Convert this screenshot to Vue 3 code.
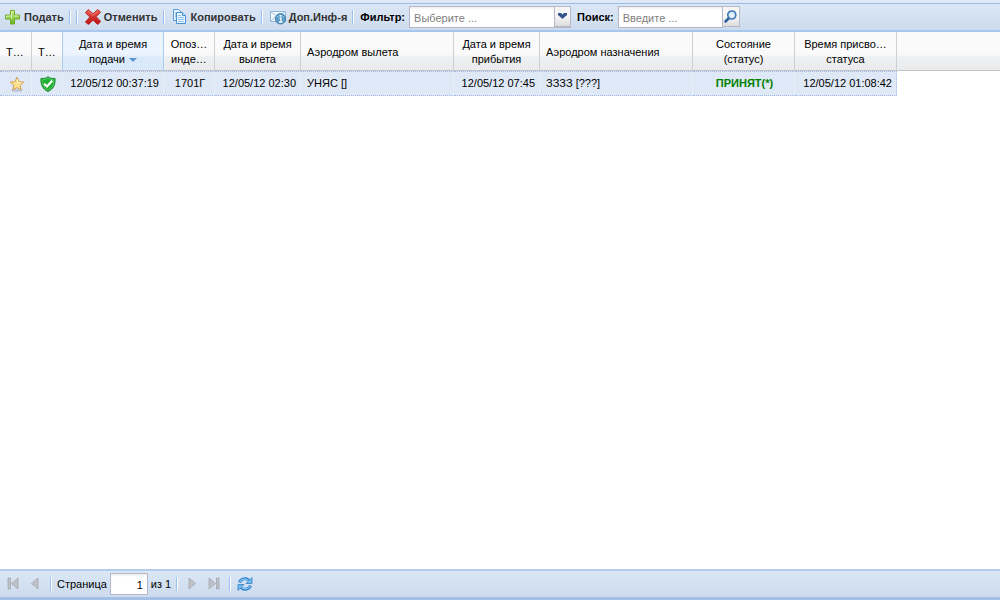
<script setup>
import { ref } from 'vue'

const filter = ref('')
const search = ref('')
const page = ref('1')

const columns = [
  { key: 'star', width: 32, lines: ['Т…'], left: true },
  { key: 'shield', width: 31, lines: ['Т…'], left: true },
  { key: 'filed', width: 101, lines: ['Дата и время', 'подачи'], sorted: true },
  { key: 'ident', width: 51, lines: ['Опоз…', 'инде…'] },
  { key: 'departure', width: 86, lines: ['Дата и время', 'вылета'] },
  { key: 'from', width: 153, lines: ['Аэродром вылета'], left: true },
  { key: 'arrival', width: 86, lines: ['Дата и время', 'прибытия'] },
  { key: 'to', width: 153, lines: ['Аэродром назначения'], left: true },
  { key: 'status', width: 102, lines: ['Состояние', '(статус)'] },
  { key: 'statusTime', width: 102, lines: ['Время присво…', 'статуса'] },
]

const rows = [
  {
    filed: '12/05/12 00:37:19',
    ident: '1701Г',
    departure: '12/05/12 02:30',
    from: 'УНЯС []',
    arrival: '12/05/12 07:45',
    to: 'ЗЗЗЗ [???]',
    status: 'ПРИНЯТ(*)',
    statusTime: '12/05/12 01:08:42',
  },
]
</script>

<template>
  <main class="panel">
    <div class="toolbar" role="toolbar">
      <button type="button" class="tool">
        <svg class="icon" viewBox="0 0 16 16" aria-hidden="true">
          <defs>
            <linearGradient id="plus" x2="0" y2="1"><stop stop-color="#c6ee86" /><stop offset="1" stop-color="#65b51d" /></linearGradient>
          </defs>
          <path d="M5.5 1.5h4v4.5h5v4h-5v5h-4v-5h-5v-4h5z" fill="url(#plus)" stroke="#6aa82c" />
          <path d="M6.5 10V2.500h2M1.500 9V7h5M9 7h4.500" fill="none" stroke="#e3f8bd" stroke-opacity=".8" />
        </svg>
        <span>Подать</span>
      </button>
      <i class="sep"></i>
      <i class="sep"></i>
      <button type="button" class="tool">
        <svg class="icon" viewBox="0 0 16 16" aria-hidden="true">
          <defs>
            <linearGradient id="cross" x2="0" y2="1"><stop stop-color="#ec5b54" /><stop offset="1" stop-color="#b80e0e" /></linearGradient>
          </defs>
          <path d="M3.300.500 8 4.800 12.700.500 15.700 3.200 11.200 7.700 15.800 12.500 12.700 15.600 8 11.200 3.500 15.600.300 13 4.800 8 .300 3.700z" fill="url(#cross)" stroke="#b51f1d" stroke-width=".8" />
          <path d="M3.500 2.200 8 6.500l4.500-4.300" fill="none" stroke="#f58b80" stroke-width=".8" />
        </svg>
        <span>Отменить</span>
      </button>
      <i class="sep"></i>
      <button type="button" class="tool">
        <svg class="icon" viewBox="0 0 16 16" aria-hidden="true">
          <path d="M1.500.500h5l3 3v8h-8z" fill="#e4f2ff" stroke="#5d9cd8" />
          <path d="M3 4h2M3 6h2M3 8h2" stroke="#7eb4e6" />
          <path d="M4.500 3.500h6l3 3v8h-9z" fill="#e9f5ff" stroke="#4b90d1" />
          <path d="M10.500 3.500v3h3" fill="#b9dbf8" stroke="#4b90d1" />
          <path d="M6 6.500h3M6 8.500h6M6 10.500h6M6 12.500h6" stroke="#8fc0ec" />
        </svg>
        <span>Копировать</span>
      </button>
      <i class="sep"></i>
      <button type="button" class="tool">
        <svg class="icon" viewBox="0 0 16 16" aria-hidden="true">
          <path d="M.5 2.500h15v10H.500z" fill="#f3f8fd" stroke="#8fb8de" />
          <path d="M1 3l7 5 7-5M1 12l4-4" fill="none" stroke="#a9c8e5" />
          <circle cx="10.500" cy="9.800" r="5.200" fill="#5a9bc8" stroke="#457fa9" />
          <path d="M7 8.500a4 4 0 0 1 7 0" fill="none" stroke="#a7d0ea" />
          <path d="M10.500 6.300v1.500M9.500 9.200h1.500v4M9 13h3.500" fill="none" stroke="#fff" stroke-width="1.300" />
        </svg>
        <span>Доп.Инф-я</span>
      </button>
      <i class="sep"></i>
      <label for="filter" class="caption">Фильтр:</label>
      <span class="combo">
        <select id="filter" v-model="filter" class="field select">
          <option value="">Выберите ...</option>
        </select>
        <span class="trigger arrow">
          <svg viewBox="0 0 15 18" aria-hidden="true"><path d="M3 6h3l1.500 1.500L9 6h3v2l-4.500 4L3 8z" fill="#33558a" /></svg>
        </span>
      </span>
      <label for="search" class="caption">Поиск:</label>
      <span class="combo">
        <input id="search" v-model="search" class="field search" type="text" placeholder="Введите ..." />
        <button type="button" class="trigger find" aria-label="Найти">
          <svg viewBox="0 0 15 18" aria-hidden="true">
            <path d="M5.500 10.500 2.500 13.500" stroke="#2d5f9e" stroke-width="2.500" stroke-linecap="round" />
            <circle cx="8.800" cy="7" r="4" fill="#e3eefb" stroke="#3f78b8" stroke-width="1.700" />
          </svg>
        </button>
      </span>
    </div>

    <div class="grid">
      <table>
        <colgroup>
          <col v-for="c in columns" :key="c.key" :style="{ width: c.width + 'px' }" />
          <col />
        </colgroup>
        <thead>
          <tr>
            <th v-for="c in columns" :key="c.key" scope="col" :class="{ left: c.left, sorted: c.sorted }">
              <div v-for="(line, i) in c.lines" :key="i" class="line">
                {{ line }}<svg v-if="c.sorted && i === 1" class="sort" viewBox="0 0 8 4" aria-hidden="true"><path d="M0 0h8L4 4z" fill="#5b93d2" /></svg>
              </div>
            </th>
            <td class="filler"></td>
          </tr>
        </thead>
        <tbody>
          <tr v-for="(r, n) in rows" :key="n" class="selected">
            <td class="mark">
              <svg class="icon" viewBox="0 0 16 16" aria-label="Избранное">
                <ellipse cx="8" cy="14.500" rx="5.500" ry="1.200" fill="#b9c3d4" />
                <path d="M8 1.200 10 5.600l4.700.500-3.500 3.200 1 4.700L8 11.600 3.800 14l1-4.700L1.300 6.100 6 5.600z" fill="#ffe08d" stroke="#cf9f58" stroke-linejoin="round" />
                <path d="M8 3.500 9.300 6.500l3 .300" fill="none" stroke="#fff3c4" />
              </svg>
            </td>
            <td class="mark shield">
              <svg class="icon" viewBox="0 0 16 16" aria-label="Проверено">
                <path d="M8 .700C10 2.500 12.500 2.800 15 2.300 15.500 8.500 13.500 13 8 15.500 2.500 13 .500 8.500 1 2.300 3.500 2.800 6 2.500 8 .700z" fill="#22ae35" stroke="#168b29" />
                <path d="M8 2.200c2 1.400 3.800 1.700 5.800 1.500C14 8 12.500 12 8 14.200 3.500 12 2 8 2.200 3.700 4.200 3.900 6 3.600 8 2.200z" fill="none" stroke="#69d374" stroke-width=".7" />
                <path d="M4.200 7.800 7 10.500l5.200-5.700" fill="none" stroke="#fff" stroke-width="2.200" />
              </svg>
            </td>
            <td class="end">{{ r.filed }}</td>
            <td class="center">{{ r.ident }}</td>
            <td class="end">{{ r.departure }}</td>
            <td>{{ r.from }}</td>
            <td class="end">{{ r.arrival }}</td>
            <td>{{ r.to }}</td>
            <td class="center status">{{ r.status }}</td>
            <td class="end last">{{ r.statusTime }}</td>
            <td class="blank"></td>
          </tr>
        </tbody>
      </table>
    </div>

    <nav class="pager" aria-label="Страницы">
      <button type="button" class="nav" disabled aria-label="Первая">
        <svg class="icon" viewBox="0 0 16 16"><path d="M3 2h2.500v11H3zM13 2v11L6.500 7.500z" fill="#bfc2c8" stroke="#9da1a8" stroke-width=".7" /></svg>
      </button>
      <button type="button" class="nav" disabled aria-label="Предыдущая">
        <svg class="icon" viewBox="0 0 16 16"><path d="M11 2v11L4.500 7.500z" fill="#bfc2c8" stroke="#9da1a8" stroke-width=".7" /></svg>
      </button>
      <i class="sep"></i>
      <label for="page">Страница</label>
      <input id="page" v-model="page" class="field page" type="text" />
      <span>из 1</span>
      <i class="sep"></i>
      <button type="button" class="nav" disabled aria-label="Следующая">
        <svg class="icon" viewBox="0 0 16 16"><path d="M5 2v11L11.500 7.500z" fill="#bfc2c8" stroke="#9da1a8" stroke-width=".7" /></svg>
      </button>
      <button type="button" class="nav" disabled aria-label="Последняя">
        <svg class="icon" viewBox="0 0 16 16"><path d="M3 2v11L9.500 7.500zM10.500 2H13v11h-2.500z" fill="#bfc2c8" stroke="#9da1a8" stroke-width=".7" /></svg>
      </button>
      <i class="sep"></i>
      <button type="button" class="nav" aria-label="Обновить">
        <svg class="icon" viewBox="0 0 16 16">
          <path d="M2.500 6.500C4 2.500 9 1.500 12 4.500M13.500 9.500C12 13.500 7 14.500 4 11.500" fill="none" stroke="#2f7fc9" stroke-width="3" />
          <path d="M15 1.500v6H9zM1 14.500v-6h6z" fill="#79bdf0" stroke="#2f7fc9" stroke-width=".8" />
          <path d="M2.800 6C4.500 3 8.500 2 11.500 4.700M13.200 10C11.500 13 7.500 14 4.500 11.300" fill="none" stroke="#8ccbf7" stroke-width="1.200" />
        </svg>
      </button>
    </nav>
  </main>
</template>

<style>
body {
  margin: 0;
}
</style>

<style scoped>
.panel {
  box-sizing: border-box;
  display: flex;
  flex-direction: column;
  min-height: 100vh;
  padding: 3px 0;
  background: linear-gradient(#dfe8f6 50%, #a3bfe6 50%);
  font: 11px/15px "Liberation Sans", Arial, sans-serif;
  color: #000;
}
button,
input,
select {
  font: inherit;
  margin: 0;
}
.icon {
  display: block;
  width: 16px;
  height: 16px;
  flex: none;
}
.toolbar {
  box-sizing: border-box;
  display: flex;
  align-items: center;
  height: 29px;
  padding-left: 5px;
  border-top: 1px solid #99bce8;
  border-bottom: 2px solid #a9c7ee;
  background: linear-gradient(#dbe7f5, #cddbee);
}
.tool {
  display: flex;
  align-items: center;
  gap: 3px;
  padding: 0;
  border: 0;
  background: none;
  font-weight: bold;
  color: #333;
  white-space: nowrap;
}
.sep {
  flex: none;
  width: 1px;
  height: 14px;
  margin-left: 5px;
  background: #98c0f4;
  border-right: 1px solid #fff;
}
.sep + .tool {
  margin-left: 7px;
}
.caption {
  margin: 0 4px 0 6px;
  font-weight: bold;
  white-space: nowrap;
}
.combo {
  position: relative;
  display: flex;
}
.field {
  box-sizing: border-box;
  height: 22px;
  padding: 2px 4px 0;
  border: 1px solid #b5b8c8;
  border-radius: 0;
  background: linear-gradient(#eee, #fff 3px);
  color: #000;
}
.select {
  width: 162px;
  appearance: none;
  color: #808080;
}
.search {
  width: 105px;
}
.search::placeholder {
  color: #808080;
  opacity: 1;
}
.trigger {
  box-sizing: border-box;
  width: 17px;
  height: 21px;
  padding: 0;
  border: 1px solid #b5b8c8;
  background: linear-gradient(#f6f6f6 50%, #dcdcdc);
}
.trigger svg {
  display: block;
  width: 15px;
  height: 18px;
}
.find {
  border-left: 0;
}
.arrow {
  position: absolute;
  top: 0;
  right: 0;
  pointer-events: none;
}
.grid {
  flex: 1;
  background: #fff;
}
table {
  width: 100%;
  table-layout: fixed;
  border-collapse: separate;
  border-spacing: 0;
}
th,
.filler {
  box-sizing: border-box;
  height: 39px;
  padding: 2px 6px 0;
  border-right: 1px solid #d0d0d0;
  border-bottom: 1px solid #c5c5c5;
  background: linear-gradient(#fafafa 60%, #eff0f1 65%, #eaebec);
  font-weight: normal;
  text-align: center;
  white-space: nowrap;
}
.filler {
  border-right: 0;
}
th.left {
  text-align: left;
}
th.sorted {
  border-right-color: #aaccf6;
  background: linear-gradient(#ebf3fd 60%, #dcebfb 65%, #d9e8fb);
}
th:has(+ .sorted) {
  border-right-color: #aaccf6;
}
.sort {
  width: 8px;
  height: 4px;
  margin-left: 4px;
  vertical-align: 1px;
}
.selected td {
  box-sizing: border-box;
  height: 25px;
  padding: 0 6px;
  border-top: 1px dotted #a3bae9;
  border-bottom: 1px dotted #a3bae9;
  border-right: 1px solid #e8eefa;
  background: #dfe8f6;
  white-space: nowrap;
}
.selected .mark {
  padding: 0 0 0 9px;
}
.selected .shield {
  padding-left: 8px;
}
.selected .end {
  padding: 0 4px 0 0;
  text-align: right;
}
.selected .center {
  padding: 0 2px 0 4px;
  text-align: center;
}
.selected .status {
  font-weight: bold;
  color: #008000;
}
.selected .last {
  border-right: 1px dotted #a3bae9;
}
.selected .blank {
  border-color: transparent;
  background: #fff;
}
.pager {
  box-sizing: border-box;
  display: flex;
  align-items: center;
  height: 28px;
  padding-left: 5px;
  border-top: 2px solid #b4cdef;
  background: linear-gradient(#dbe7f5, #cddbee);
}
.nav {
  padding: 0;
  border: 0;
  background: none;
}
.nav + .nav,
.sep + .nav {
  margin-left: 6px;
}
.nav + .sep {
  margin-left: 7px;
}
.pager label {
  margin: 0 3px 0 5px;
}
.page {
  width: 38px;
  margin-right: 3px;
  text-align: right;
}
</style>
